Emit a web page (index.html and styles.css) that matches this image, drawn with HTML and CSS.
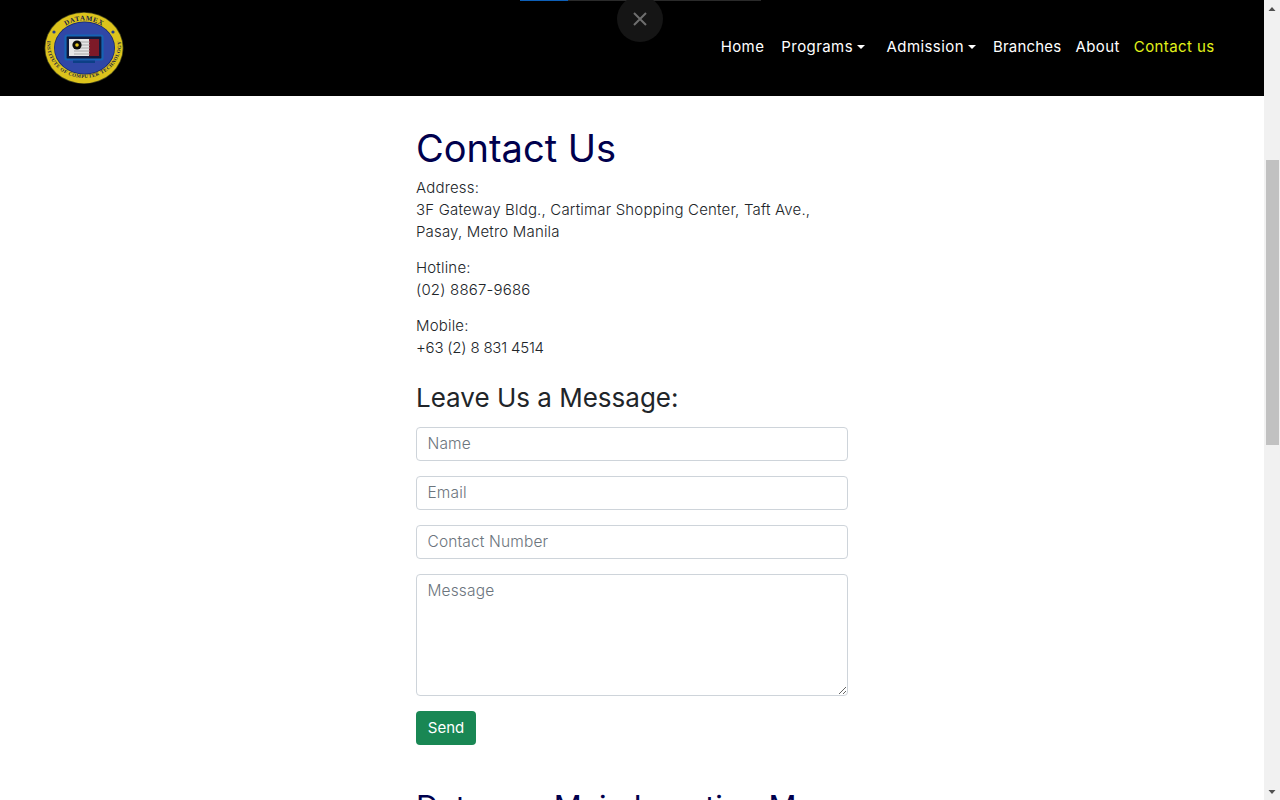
FILE: index.html
```html
<!DOCTYPE html>
<html lang="en">
<head>
<meta charset="utf-8">
<title>Contact Us</title>
<link rel="stylesheet" href="styles.css">
</head>
<body>
<div class="app">
  <div class="page">
    <header class="topbar">
      <svg class="logo" viewBox="0 0 80 74" aria-label="Datamex logo">
        <defs>
          <path id="arcTop" d="M9 38 A31 28.5 0 0 1 71 38"/>
          <path id="arcBottom" d="M3.5 28 A37 33.5 0 1 0 76.5 28"/>
        </defs>
        <ellipse cx="40" cy="37" rx="39.5" ry="36" fill="#4a4a1a"/>
        <ellipse cx="40" cy="37" rx="38.7" ry="35.2" fill="#dcc31c"/>
        <ellipse cx="40.5" cy="37" rx="30.5" ry="26.5" fill="#16266e"/>
        <ellipse cx="40.5" cy="37" rx="29.8" ry="25.8" fill="#3047a6"/>
        <circle cx="10" cy="21" r="1.6" fill="#24408f"/>
        <circle cx="69" cy="21" r="1.6" fill="#24408f"/>
        <text class="logo-top"><textPath href="#arcTop" startOffset="50%" text-anchor="middle">DATAMEX</textPath></text>
        <text class="logo-ring"><textPath href="#arcBottom" startOffset="50%" text-anchor="middle">INSTITUTE OF COMPUTER TECHNOLOGY</textPath></text>
        <rect x="21.5" y="24.5" width="37" height="24" rx="1.5" fill="#101a3c" stroke="#1663b3" stroke-width="2.2"/>
        <rect x="25" y="28" width="20" height="17" fill="#e6e6e6"/>
        <rect x="45" y="28" width="10" height="17" fill="#7d1a28"/>
        <path d="M30 31h16M30 34h16M30 37h16M30 40h16M30 43h16" stroke="#9a9a9a" stroke-width=".8"/>
        <circle cx="33" cy="34" r="4.6" fill="#0a0a0a"/>
        <circle cx="33" cy="34" r="1.8" fill="#e4c51e"/>
        <rect x="29" y="49.5" width="22" height="2.5" fill="#0c3f86"/>
      </svg>
      <nav class="nav">
        <a class="nav-link gap-s">Home</a>
        <a class="nav-link caret gap-m">Programs</a>
        <a class="nav-link caret gap-xs">Admission</a>
        <a class="nav-link snug">Branches</a>
        <a class="nav-link tuck">About</a>
        <a class="nav-link active">Contact us</a>
      </nav>
    </header>
    <main class="content">
      <h1 class="title">Contact Us</h1>
      <p class="info">Address:<br>3F Gateway Bldg., Cartimar Shopping Center, Taft Ave.,<br>Pasay, Metro Manila</p>
      <p class="info">Hotline:<br>(02) 8867-9686</p>
      <p class="info">Mobile:<br><span class="tight">+63 (2) 8 831 4514</span></p>
      <h2 class="subtitle">Leave Us a Message:</h2>
      <form class="form">
        <input class="field" type="text" placeholder="Name">
        <input class="field" type="text" placeholder="Email">
        <input class="field" type="text" placeholder="Contact Number">
        <textarea class="field area" placeholder="Message"></textarea>
        <button class="send" type="button">Send</button>
      </form>
      <h2 class="map-title">Datamex Main Location Map</h2>
    </main>
  </div>
  <aside class="scrollbar">
    <svg class="arrow" viewBox="0 0 16 16"><path d="M4.5 11h7L8 7z"/></svg>
    <div class="track"><div class="thumb"></div></div>
    <svg class="arrow" viewBox="0 0 16 16"><path d="M4.5 6h7L8 10z"/></svg>
  </aside>
</div>
<div class="progress"><div class="progress-fill"></div></div>
<div class="close">
  <svg viewBox="0 0 14 14"><path d="M1 1l12 12M13 1L1 13"/></svg>
</div>
</body>
</html>
```
FILE: styles.css
```css
* { box-sizing: border-box; }
html, body { margin: 0; height: 100%; overflow: hidden; background: #fff; }
body { font-family: Inter, "Liberation Sans", sans-serif; color: #212529; font-size: 15px; }
.app { display: flex; height: 800px; }
.page { flex: 1; min-width: 0; overflow: hidden; }
.topbar { height: 96px; background: #000; display: flex; align-items: center; justify-content: space-between; padding: 0 42px 0 44px; }
.logo { width: 80px; height: 74px; display: block; }
.logo-top { font: bold 7px "Liberation Serif", serif; fill: #15204a; letter-spacing: .5px; }
.logo-ring { font: bold 5px "Liberation Serif", serif; fill: #1b1f3f; letter-spacing: .45px; }
.nav { display: flex; align-items: center; margin-top: -2px; }
.nav-link { color: #fff; font-size: 15px; font-weight: 400; line-height: 24px; padding: 0 7.5px; white-space: nowrap; letter-spacing: .42px; }
.nav-link.caret { display: flex; align-items: center; }
.nav-link.caret::after { content: ""; margin-left: 4px; border-top: 4.5px solid #fff; border-left: 4.5px solid transparent; border-right: 4.5px solid transparent; }
.nav-link.gap-s { margin-right: 2px; }
.nav-link.gap-m { margin-right: 6.5px; }
.nav-link.gap-xs { margin-right: 2px; }
.nav-link.snug { margin-right: -1px; letter-spacing: .2px; }
.nav-link.tuck { margin-right: -1px; }
.nav-link.active { color: #e2f21a; letter-spacing: .4px; }
.content { width: 432px; margin-left: 416px; padding-top: 28px; }
.title { margin: 0 0 5px; font-size: 38px; line-height: 48px; font-weight: 400; color: #00004d; }
.info { margin: 0 0 14px; font-size: 15px; font-weight: 300; line-height: 22px; white-space: nowrap; letter-spacing: .18px; }
.tight { letter-spacing: -.2px; }
.subtitle { margin: 23px 0 13px; font-size: 26px; line-height: 32px; font-weight: 400; }
.form { display: flex; flex-direction: column; gap: 14.8px; align-items: flex-start; }
.field { display: block; width: 432px; height: 34.2px; padding: 0 10.5px 2px; border: 1px solid #ced4da; border-radius: 4px; background: #fff; font: 300 15.5px Inter, "Liberation Sans", sans-serif; letter-spacing: .14px; color: #212529; outline: none; }
.field::placeholder { color: #6c757d; opacity: 1; }
.area { height: 122px; padding-top: 6px; resize: vertical; }
.send { height: 34px; width: 60px; padding: 0; border: 0; border-radius: 4px; background: #198754; color: #fff; font: 400 15px Inter, "Liberation Sans", sans-serif; }
.map-title { margin: 42px 0 0; font-size: 31px; line-height: 40px; font-weight: 400; color: #00004d; white-space: nowrap; }
.scrollbar { width: 16px; background: #f1f1f1; display: flex; flex-direction: column; }
.arrow { width: 16px; height: 16px; flex: none; display: block; fill: #505050; }
.track { flex: 1; padding-top: 144px; }
.thumb { width: 13px; height: 285px; margin-left: 2px; background: #c1c1c1; }
.progress { position: absolute; top: 0; left: 520px; width: 241px; height: 1px; background: #2a2a2a; }
.progress-fill { width: 48px; height: 100%; background: #0d5fb8; }
.close { position: absolute; left: 617px; top: -4px; width: 46px; height: 46px; border-radius: 50%; background: #151515; display: flex; align-items: center; justify-content: center; }
.close svg { width: 14px; height: 14px; fill: none; stroke: #6e6e6e; stroke-width: 2; }
```
